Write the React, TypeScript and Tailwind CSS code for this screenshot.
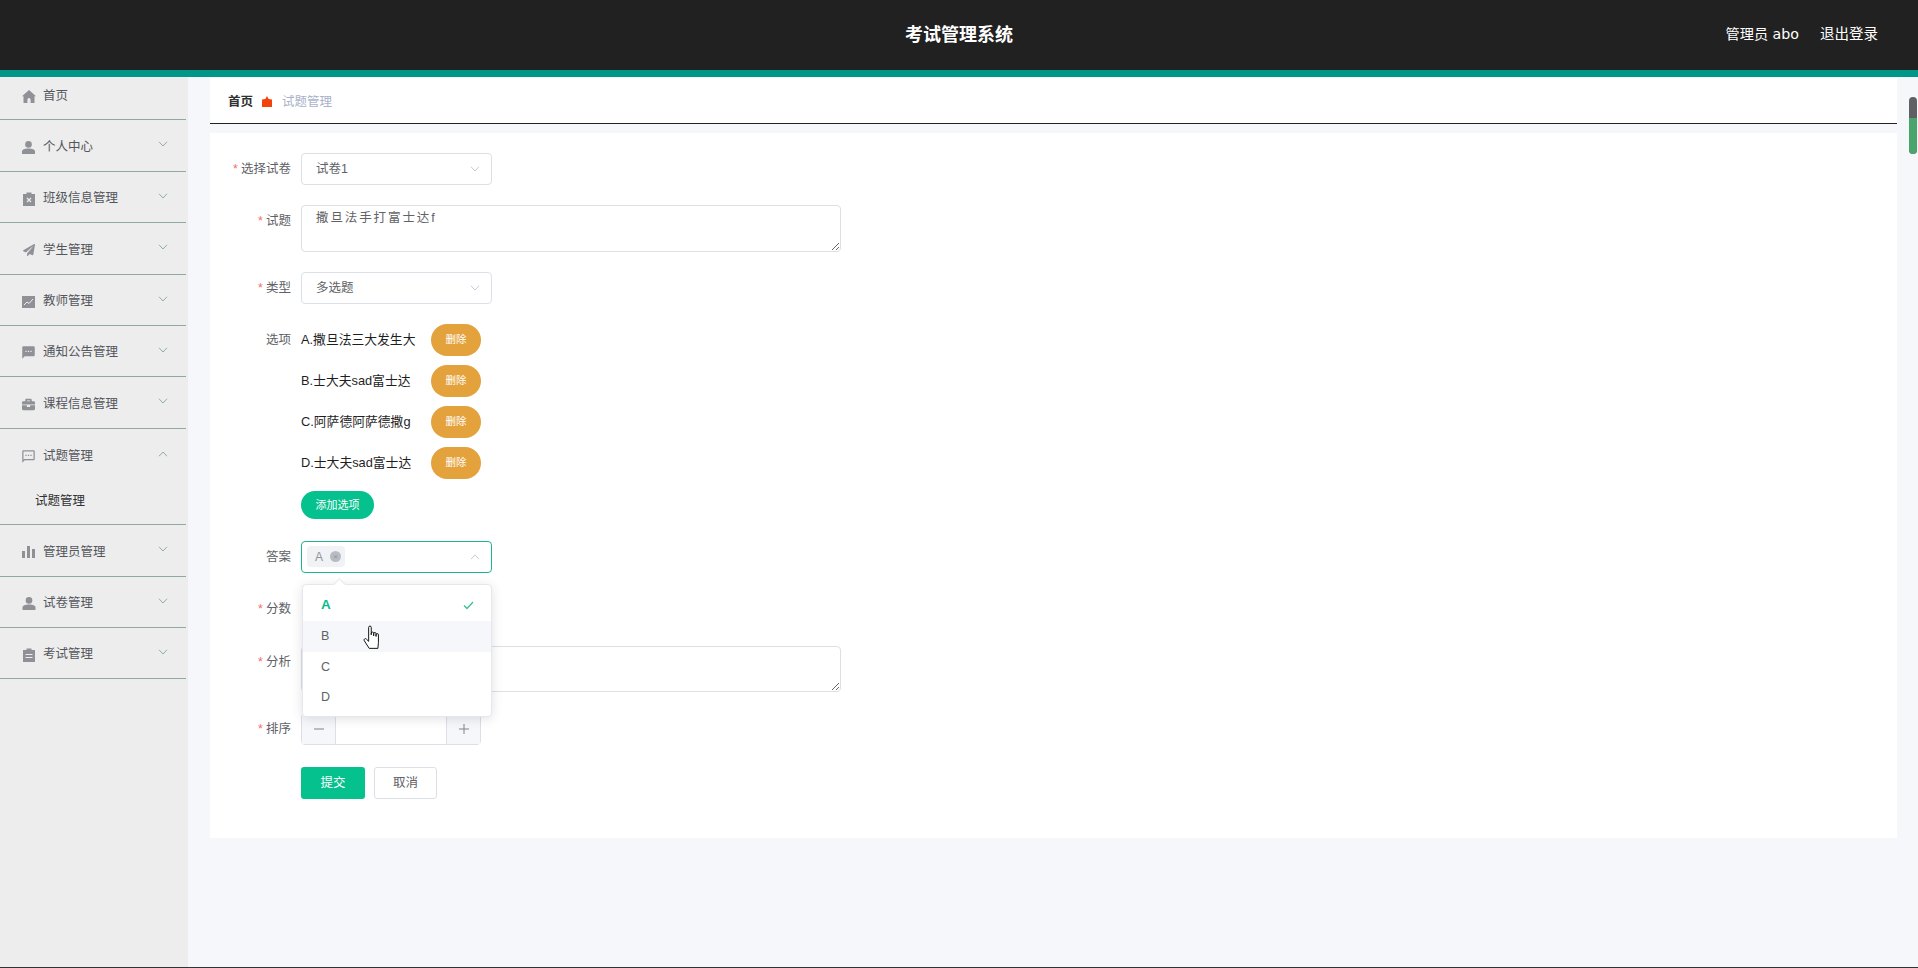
import React from "react";
import { FaPaperPlane, FaBriefcase } from "react-icons/fa";
import { MdSms, MdOutlineSms } from "react-icons/md";

const G = "#8f9196";
const Home = () => (
  <svg width="14" height="13" viewBox="0 0 14 13">
    <path d="M7 0L14 6.3H12.5V13H8.6V9.6a1.6 1.6 0 0 0-3.2 0V13H1.5V6.3H0Z" fill={G} />
  </svg>
);
const User = ({ w = 13 }: { w?: number }) => (
  <svg width={w} height="13" viewBox="0 0 13 13">
    <circle cx="6.5" cy="3.4" r="3.3" fill={G} />
    <path d="M0 13V10.6C0 8.6 2.5 7.6 6.5 7.6S13 8.6 13 10.6V13Z" fill={G} />
  </svg>
);
const ClipX = () => (
  <svg width="12" height="14" viewBox="0 0 12 14">
    <path d="M0 2h3.5V.6h5V2H12v12H0z" fill={G} />
    <path d="M4 6l4 4M8 6l-4 4" stroke="#ededed" strokeWidth="1.2" />
  </svg>
);
const AreaC = () => (
  <svg width="13" height="12" viewBox="0 0 13 12">
    <rect width="13" height="12" fill={G} />
    <path d="M2 9l3-3 2 1.5L11 3" stroke="#ededed" strokeWidth="1" fill="none" />
  </svg>
);
const Bars = () => (
  <svg width="13" height="12" viewBox="0 0 13 12">
    <path d="M0 5h3v7H0zM5 0h3v12H5zM10 3h3v9h-3z" fill={G} />
  </svg>
);
const Clip = () => (
  <svg width="12" height="14" viewBox="0 0 12 14">
    <path d="M0 2h3.5V.6h5V2H12v12H0z" fill={G} />
    <path d="M2.5 6.5h7M2.5 9.5h7" stroke="#ededed" strokeWidth="1.2" />
  </svg>
);
const Chevron = ({ up, color = "#86a59b" }: { up?: boolean; color?: string }) => (
  <svg width="10" height="6" viewBox="0 0 10 6" fill="none">
    <path d={up ? "M1 5.2L5 1l4 4.2" : "M1 .8L5 5l4-4.2"} stroke={color} strokeWidth="0.9" />
  </svg>
);

type Item = { label: string; icon: React.ReactNode; h: string; chevron?: boolean; first?: boolean };
const items: Item[] = [
  { label: "首页", icon: <Home />, h: "h-[43px]", first: true },
  { label: "个人中心", icon: <User />, h: "h-[52px]", chevron: true },
  { label: "班级信息管理", icon: <ClipX />, h: "h-[51px]", chevron: true },
  { label: "学生管理", icon: <FaPaperPlane size={12} color={G} />, h: "h-[52px]", chevron: true },
  { label: "教师管理", icon: <AreaC />, h: "h-[51px]", chevron: true },
  { label: "通知公告管理", icon: <MdSms size={15} color={G} />, h: "h-[51px]", chevron: true },
  { label: "课程信息管理", icon: <FaBriefcase size={13} color={G} />, h: "h-[52px]", chevron: true },
];
const items2: Item[] = [
  { label: "管理员管理", icon: <Bars />, h: "h-[52px]", chevron: true },
  { label: "试卷管理", icon: <User w={14} />, h: "h-[51px]", chevron: true },
  { label: "考试管理", icon: <Clip />, h: "h-[51px]", chevron: true },
];

function SideRow({ item }: { item: Item }) {
  return (
    <div className={`${item.h} ${item.first ? "pb-[3px]" : "pt-[3px]"} flex items-center border-b border-[#8fa8a0] pl-[21px] pr-[18px]`}>
      <span className="flex w-[15px] justify-center">{item.icon}</span>
      <span className="ml-[7px] flex-1 text-[12.5px] text-[#54565c]">{item.label}</span>
      {item.chevron && (
        <span className="mb-[6px] flex">
          <Chevron />
        </span>
      )}
    </div>
  );
}

function Label({ text, req }: { text: string; req?: boolean }) {
  return (
    <div className="w-[91px] shrink-0 pr-[10px] text-right text-[12.5px] leading-[32px] text-[#606266]">
      {req && <span className="mr-[3px] text-[#f56c6c]">*</span>}
      {text}
    </div>
  );
}

function Select({ value }: { value: string }) {
  return (
    <div className="flex h-[32px] w-[191px] items-center justify-between rounded-[4px] border border-[#dcdfe6] bg-white pl-[14px] pr-[11px] text-[12.5px] text-[#606266]">
      <span>{value}</span>
      <Chevron color="#c0c4cc" />
    </div>
  );
}

function Area({ value, h }: { value?: string; h: string }) {
  return (
    <textarea
      readOnly
      value={value ?? ""}
      className={`${h} block w-[540px] resize-y rounded-[4px] border border-[#dcdfe6] bg-white px-[14px] py-[2px] text-[12.5px] leading-[20px] tracking-[1.9px] text-[#606266] outline-none`}
    />
  );
}

function Opt({ text }: { text: string }) {
  return (
    <div className="flex h-[32px] items-center">
      <span className="w-[130px] text-[12.8px] text-[#1f1f1f]">{text}</span>
      <button className="h-[32px] w-[50px] rounded-[16px] bg-[#e4a23c] text-[10.5px] text-white">删除</button>
    </div>
  );
}

const Hand = () => (
  <svg width="20" height="25" viewBox="0 0 18 23" className="absolute left-[60px] top-[4px]">
    <path
      d="M5 2.2a1.2 1.2 0 0 1 2.4 0V9V7.6a1.1 1.1 0 0 1 2.2 0V10V8a1.1 1.1 0 0 1 2.2 0V10.5V9a1.1 1.1 0 0 1 2.2 0V16L13.5 21.5H5.5L1 14.5a1.2 1.2 0 0 1 2-1.4L5 15Z"
      fill="#fff"
      stroke="#111"
      strokeWidth="0.9"
      strokeLinejoin="round"
    />
  </svg>
);

export default function App() {
  return (
    <div className="flex h-[968px] w-[1918px] flex-col overflow-hidden bg-[#f5f7fa] font-['Liberation_Sans','Noto_Sans_CJK_SC',sans-serif]">
      <header className="relative flex h-[70px] shrink-0 items-center justify-end bg-[#212121] pr-[40px] text-white">
        <div className="absolute inset-x-0 pt-[1px] text-center text-[18px] font-bold">考试管理系统</div>
        <span className="relative text-[14.2px] font-['DejaVu_Sans','Noto_Sans_CJK_SC',sans-serif]">管理员 abo</span>
        <span className="relative ml-[21px] text-[14.5px]">退出登录</span>
      </header>
      <div className="h-[7px] shrink-0 bg-[#009688]" />
      <div className="flex min-h-0 flex-1">
        <aside className="w-[188px] shrink-0 bg-[#ededed] pr-[2px]">
          {items.map((i) => (
            <SideRow key={i.label} item={i} />
          ))}
          <div className="h-[96px] border-b border-[#8fa8a0]">
            <div className="flex h-[55px] items-center pl-[21px] pr-[18px]">
              <span className="flex w-[15px] justify-center">
                <MdOutlineSms size={15} color={G} />
              </span>
              <span className="ml-[7px] flex-1 text-[12.5px] text-[#54565c]">试题管理</span>
              <span className="mb-[6px] flex">
                <Chevron up />
              </span>
            </div>
            <div className="pl-[35px] pt-[8px] text-[12.5px] text-[#303133]">试题管理</div>
          </div>
          {items2.map((i) => (
            <SideRow key={i.label} item={i} />
          ))}
        </aside>
        <main className="min-w-0 flex-1 pl-[22px] pt-[1px]">
          <div className="flex h-[46px] items-center border-b border-[#222] bg-white pl-[18px] pt-[4px] text-[12.5px]">
            <span className="font-bold text-[#303133]">首页</span>
            <svg width="10" height="11" viewBox="0 0 10 11" className="mb-[3px] ml-[9px] mr-[10px]">
              <path d="M0 3.5L3.4 3 5 0 6.6 3 10 3.5V11H0Z" fill="#f4420c" />
            </svg>
            <span className="text-[#a9b2ca]">试题管理</span>
          </div>
          <div className="mt-[9px] h-[705px] bg-white pt-[20px]">
            <div className="flex">
              <Label text="选择试卷" req />
              <Select value="试卷1" />
            </div>
            <div className="mt-[20px] flex">
              <Label text="试题" req />
              <Area value="撒旦法手打富士达f" h="h-[47px]" />
            </div>
            <div className="mt-[20px] flex">
              <Label text="类型" req />
              <Select value="多选题" />
            </div>
            <div className="mt-[20px] flex">
              <Label text="选项" />
              <div className="flex flex-col gap-[9px]">
                <Opt text="A.撒旦法三大发生大" />
                <Opt text="B.士大夫sad富士达" />
                <Opt text="C.阿萨德阿萨德撒g" />
                <Opt text="D.士大夫sad富士达" />
                <button className="mt-[3px] h-[28px] w-[73px] rounded-[14px] bg-[#05c18d] text-[11px] text-white">添加选项</button>
              </div>
            </div>
            <div className="mt-[22px] flex">
              <Label text="答案" />
              <div className="relative h-[32px] w-[191px]">
                <div className="flex h-[32px] items-center justify-between rounded-[4px] border border-[#1fb48f] bg-white pl-[5px] pr-[11px]">
                  <span className="mb-[1px] flex h-[21px] w-[38px] items-center rounded-[4px] bg-[#f0f2f5] pl-[8px] text-[12px] text-[#909399]">
                    A
                    <span className="ml-[7px] flex h-[11px] w-[11px] items-center justify-center rounded-full bg-[#b8bbc2] text-[8px] leading-none text-[#8f9196]">×</span>
                  </span>
                  <Chevron up color="#c0c4cc" />
                </div>
                <div className="absolute left-[1px] top-[43px] z-10 h-[133px] w-[190px] rounded-[4px] border border-[#e4e7ed] bg-white py-[5px] shadow-[0_2px_12px_rgba(0,0,0,0.12)]">
                  <div className="absolute left-[32px] top-[-5px] h-[9px] w-[9px] rotate-45 border-l border-t border-[#e4e7ed] bg-white" />
                  <div className="relative flex h-[31px] items-center justify-between pl-[18px] pr-[17px] text-[13.5px] font-bold text-[#09bd88]">
                    A
                    <svg width="11" height="9" viewBox="0 0 11 9" fill="none">
                      <path d="M1 4.5L4 7.5 10 1" stroke="#3bbf98" strokeWidth="1.3" />
                    </svg>
                  </div>
                  <div className="relative flex h-[31px] items-center bg-[#f5f7fa] pl-[18px] text-[12.5px] text-[#606266]">
                    B
                    <Hand />
                  </div>
                  <div className="flex h-[31px] items-center pl-[18px] text-[12.5px] text-[#606266]">C</div>
                  <div className="flex h-[28px] items-center pl-[18px] text-[12.5px] text-[#606266]">D</div>
                </div>
              </div>
            </div>
            <div className="mt-[20px] flex">
              <Label text="分数" req />
              <div className="h-[32px]" />
            </div>
            <div className="mt-[21px] flex">
              <Label text="分析" req />
              <Area h="h-[46px]" />
            </div>
            <div className="mt-[21px] flex">
              <Label text="排序" req />
              <div className="flex h-[32px] w-[180px] rounded-[4px] border border-[#dcdfe6]">
                <div className="flex w-[34px] items-center justify-center border-r border-[#dcdfe6] bg-[#f5f7fa]">
                  <svg width="10" height="10" viewBox="0 0 10 10">
                    <path d="M0 5h10" stroke="#808286" strokeWidth="1" />
                  </svg>
                </div>
                <div className="flex-1 bg-white" />
                <div className="flex w-[34px] items-center justify-center border-l border-[#dcdfe6] bg-[#f5f7fa]">
                  <svg width="10" height="10" viewBox="0 0 10 10">
                    <path d="M0 5h10M5 0v10" stroke="#808286" strokeWidth="1" />
                  </svg>
                </div>
              </div>
            </div>
            <div className="ml-[91px] mt-[22px] flex gap-[9px]">
              <button className="h-[32px] w-[64px] rounded-[3px] bg-[#05c18d] text-[12.5px] text-white">提交</button>
              <button className="h-[32px] w-[63px] rounded-[3px] border border-[#dcdfe6] bg-white text-[12.5px] text-[#606266]">取消</button>
            </div>
          </div>
        </main>
        <div className="w-[21px] shrink-0 pt-[20px]">
          <div className="ml-[12px] h-[57px] w-[8px] overflow-hidden rounded-[4px] bg-[#5f6063]">
            <div className="mt-[21px] h-[36px] bg-[#4aa56c]" />
          </div>
        </div>
      </div>
      <div className="h-[1px] shrink-0 bg-[#333]" />
    </div>
  );
}
